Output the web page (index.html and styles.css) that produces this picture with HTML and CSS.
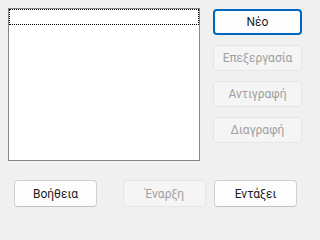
FILE: index.html
```html
<!DOCTYPE html>
<html lang="el">
<head>
<meta charset="utf-8">
<link rel="stylesheet" href="styles.css">
</head>
<body>
<div class="dialog">
  <div class="top">
    <div class="listbox"><div class="focus-item"></div></div>
    <div class="side">
      <button class="btn default">Νέο</button>
      <button class="btn disabled">Επεξεργασία</button>
      <button class="btn disabled">Αντιγραφή</button>
      <button class="btn disabled">Διαγραφή</button>
    </div>
  </div>
  <div class="bottom">
    <button class="btn wide">Βοήθεια</button>
    <button class="btn wide disabled start">Έναρξη</button>
    <button class="btn wide">Εντάξει</button>
  </div>
</div>
</body>
</html>
```

FILE: styles.css
```css
html, body {
  margin: 0;
  padding: 0;
  background: #f0f0f0;
  width: 311px;
  height: 222px;
  overflow: hidden;
  font-family: Roboto, "Noto Sans", sans-serif;
  font-size: 12px;
}
.dialog {
  padding: 8px 0 0 8px;
}
.top {
  display: flex;
  align-items: flex-start;
}
.listbox {
  box-sizing: border-box;
  width: 192px;
  height: 153px;
  background: #ffffff;
  border: 1px solid #828790;
}
.focus-item {
  box-sizing: border-box;
  height: 16px;
  border: 1px dotted #000;
}
.side {
  display: flex;
  flex-direction: column;
  gap: 10px;
  margin-left: 13px;
  margin-top: 1px;
}
.btn {
  box-sizing: border-box;
  font-family: inherit;
  font-size: 12px;
  color: #1b1b1b;
  background: #fdfdfd;
  border: 1px solid #d0d0d0;
  border-bottom-color: #c0c0c0;
  border-radius: 4px;
  padding: 0;
  margin: 0;
  line-height: 1;
}
.side .btn {
  width: 89px;
  height: 26px;
}
.btn.default {
  border: 2px solid #0067c0;
}
.btn.disabled {
  background: #f5f5f5;
  border-color: #e5e5e5;
  color: #a0a0a0;
}
.bottom {
  display: flex;
  margin-top: 19px;
  padding-left: 6px;
  gap: 8px;
}
.btn.wide {
  width: 83px;
  height: 27px;
}
.btn.start {
  margin-left: 18px;
}
```
